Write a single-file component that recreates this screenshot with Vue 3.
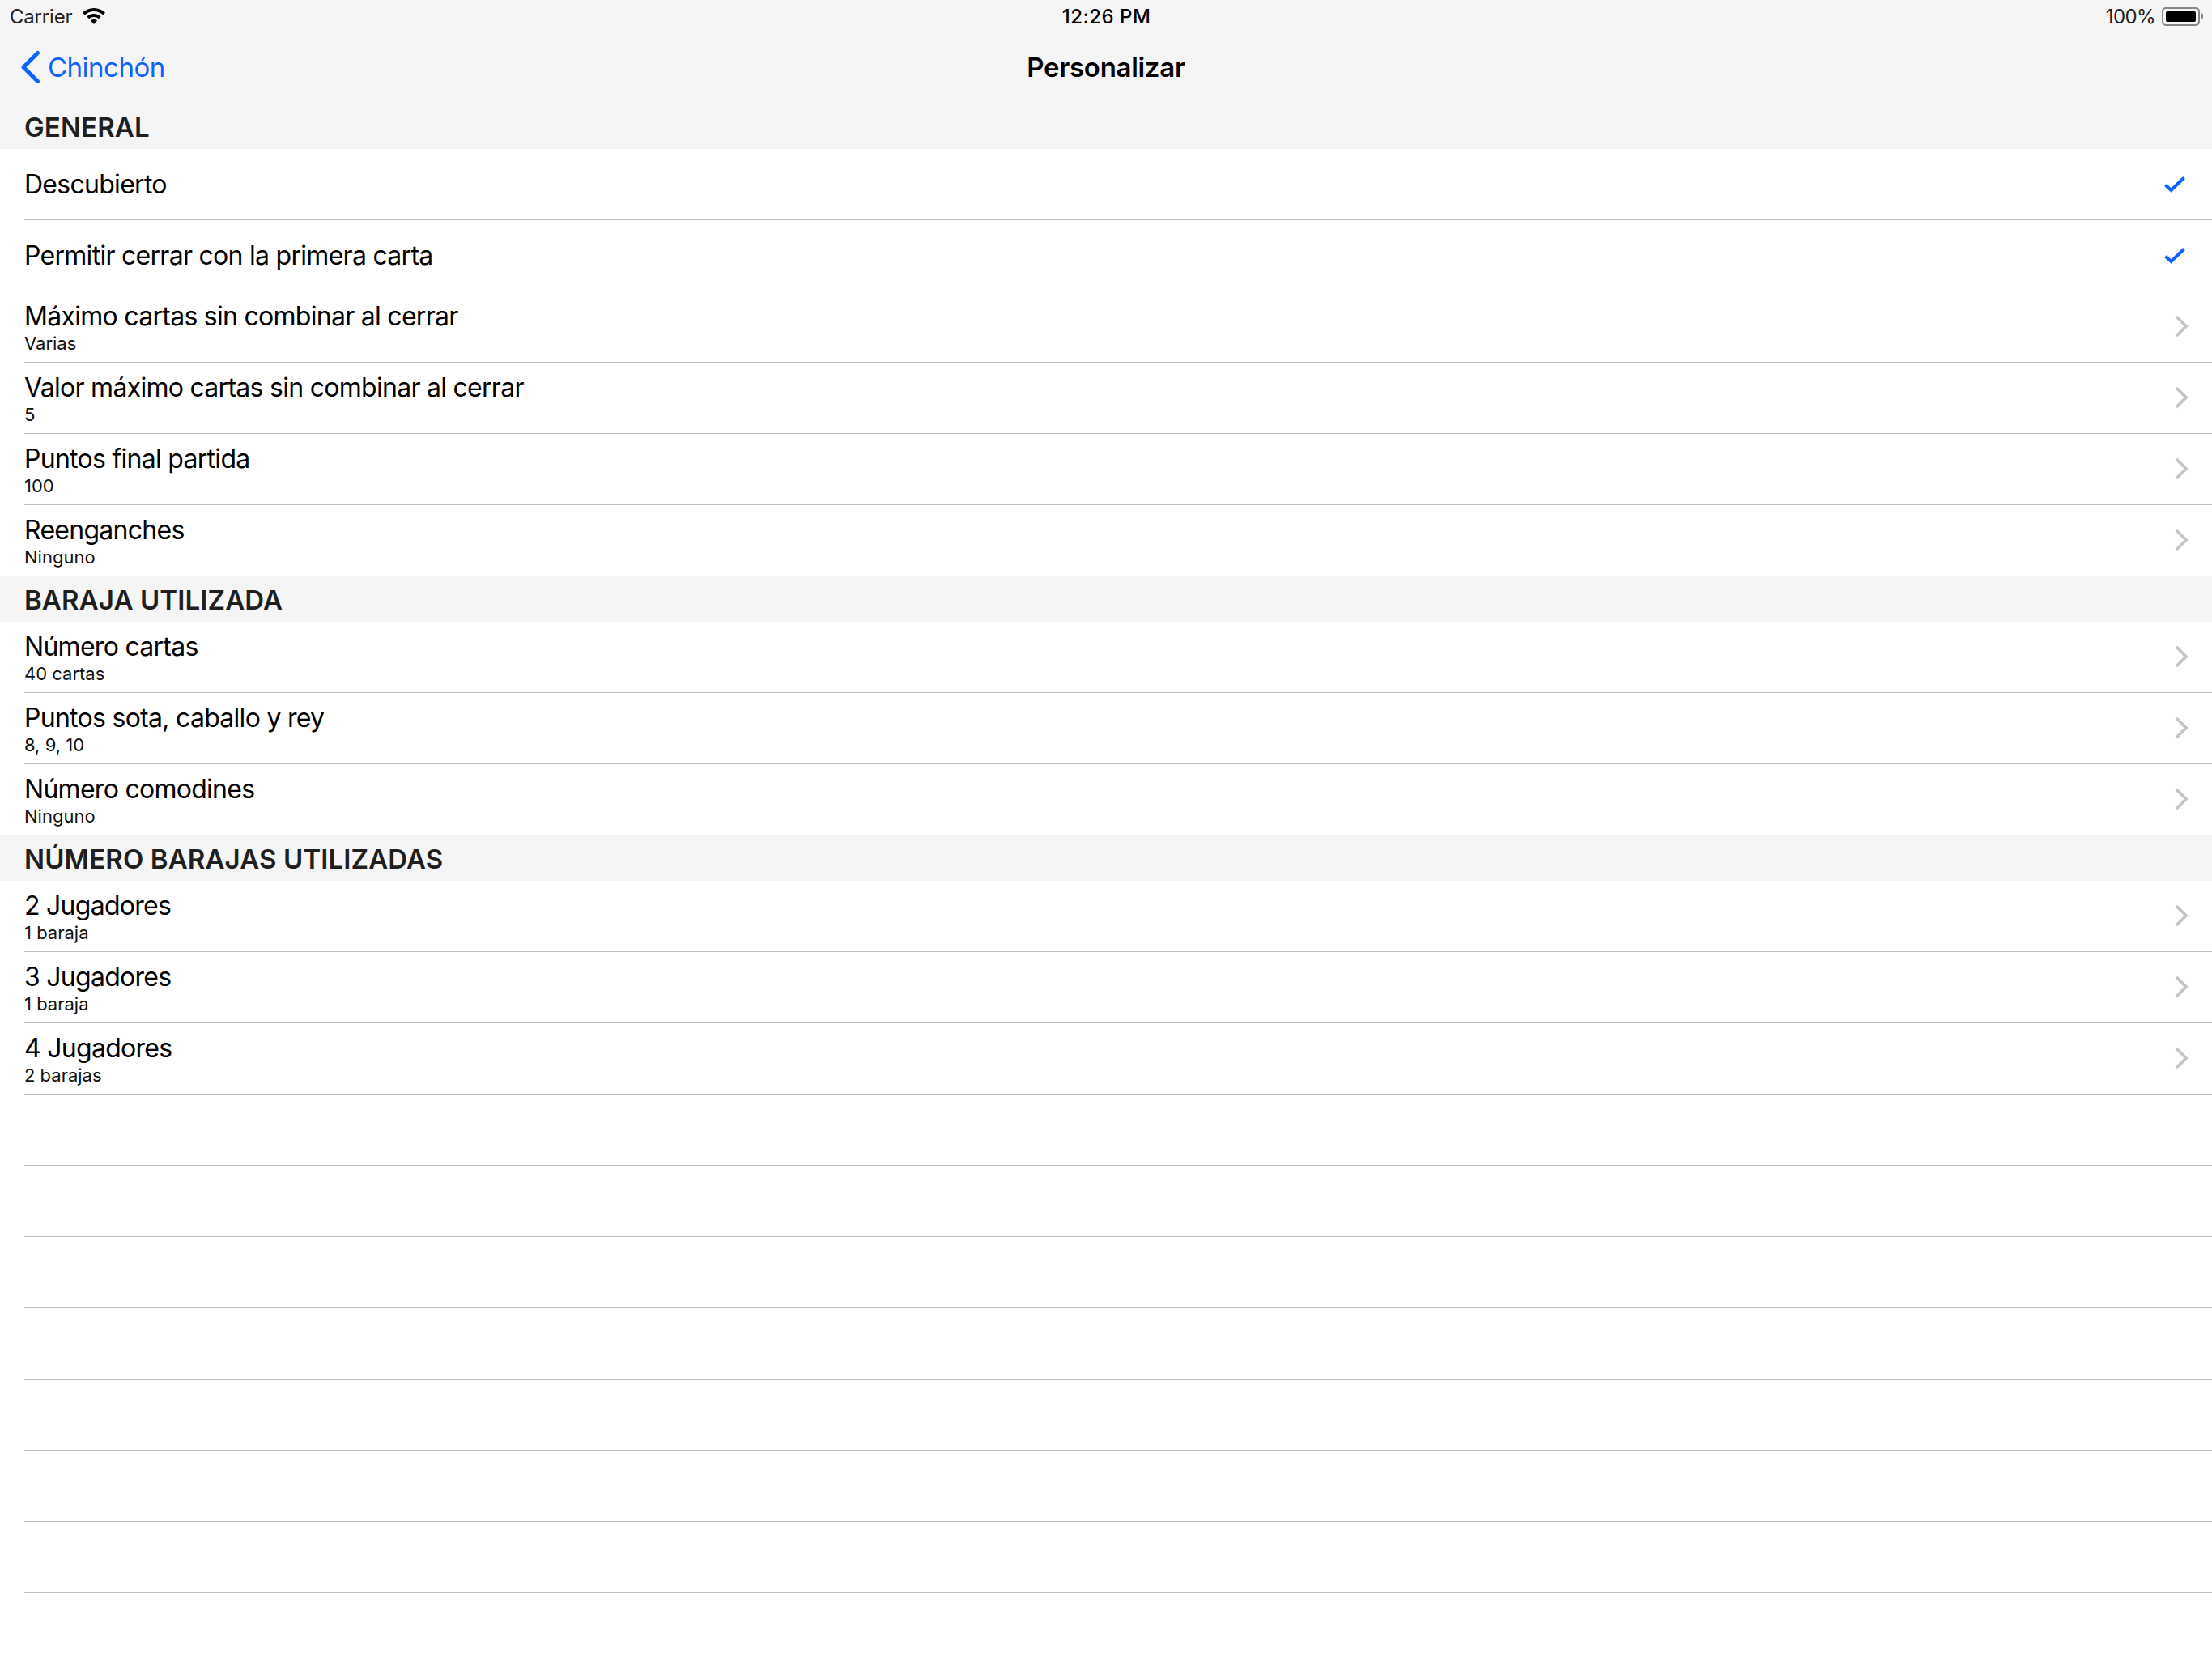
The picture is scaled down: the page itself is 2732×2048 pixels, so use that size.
<template>
  <div class="screen">
    <header class="top">
      <div class="status">
        <div class="status-left">
          <span>Carrier</span>
          <svg class="wifi" width="30" height="22" viewBox="0 0 30 22">
            <path d="M15 1C9.500 1 4.700 3.100 1 6.500L3.800 9.400C6.700 6.700 10.600 5 15 5s8.300 1.700 11.200 4.400L29 6.500C25.300 3.100 20.500 1 15 1z" fill="#000" />
            <path d="M15 8c-3.400 0-6.400 1.300-8.700 3.400l2.800 2.900c1.500-1.400 3.600-2.300 5.900-2.300s4.400.9 5.900 2.300l2.800-2.900C21.400 9.300 18.400 8 15 8z" fill="#000" />
            <path d="M15 15c-1.600 0-3 .6-4 1.600l4 4.400 4-4.400c-1-1-2.400-1.600-4-1.600z" fill="#000" />
          </svg>
        </div>
        <div class="status-time">12:26 PM</div>
        <div class="status-right">
          <span>100%</span>
          <div class="battery"><div class="battery-fill"></div></div>
          <div class="battery-nub"></div>
        </div>
      </div>
      <nav class="nav">
        <div class="back">
          <svg width="26" height="42" viewBox="0 0 26 42">
            <path d="M22.500 3.500L5 21l17.500 17.500" fill="none" stroke="#0f62fe" stroke-width="5" stroke-linecap="round" stroke-linejoin="round" />
          </svg>
          <span>Chinchón</span>
        </div>
        <div class="nav-title">Personalizar</div>
        <div></div>
      </nav>
    </header>

    <template v-for="(section, s) in sections" :key="section.title">
      <div class="section-title">{{ section.title }}</div>
      <div
        v-for="(item, i) in section.items"
        :key="item.label"
        class="row"
      >
        <div class="row-inner" :class="{ plain: i === section.items.length - 1 && s < sections.length - 1 }">
          <div class="row-text" :class="{ double: item.value }">
            <div class="row-label">{{ item.label }}</div>
            <div v-if="item.value" class="row-value">{{ item.value }}</div>
          </div>
          <svg v-if="item.checked" class="check" width="28" height="24" viewBox="0 0 28 24">
            <path d="M2.500 12.500l7 6.500L25.500 3.500" fill="none" stroke="#0f62fe" stroke-width="4" />
          </svg>
          <svg v-else class="chevron" width="18" height="28" viewBox="0 0 18 28">
            <path d="M3 2L15 14 3 26" fill="none" stroke="#c4c4c9" stroke-width="3.800" />
          </svg>
        </div>
      </div>
    </template>

    <div v-for="n in 7" :key="n" class="row">
      <div class="row-inner"></div>
    </div>
  </div>
</template>

<script setup>
const sections = [
  {
    title: 'GENERAL',
    items: [
      { label: 'Descubierto', checked: true },
      { label: 'Permitir cerrar con la primera carta', checked: true },
      { label: 'Máximo cartas sin combinar al cerrar', value: 'Varias' },
      { label: 'Valor máximo cartas sin combinar al cerrar', value: '5' },
      { label: 'Puntos final partida', value: '100' },
      { label: 'Reenganches', value: 'Ninguno' }
    ]
  },
  {
    title: 'BARAJA UTILIZADA',
    items: [
      { label: 'Número cartas', value: '40 cartas' },
      { label: 'Puntos sota, caballo y rey', value: '8, 9, 10' },
      { label: 'Número comodines', value: 'Ninguno' }
    ]
  },
  {
    title: 'NÚMERO BARAJAS UTILIZADAS',
    items: [
      { label: '2 Jugadores', value: '1 baraja' },
      { label: '3 Jugadores', value: '1 baraja' },
      { label: '4 Jugadores', value: '2 barajas' }
    ]
  }
]
</script>

<style>
html, body { background: #fff; }
</style>

<style scoped>
.screen {
  width: 2732px;
  height: 2048px;
  overflow: hidden;
  background: #fff;
  font-family: Inter, "Liberation Sans", sans-serif;
  color: #000;
}

.top {
  position: relative;
  margin-bottom: -1px;
  background: #f5f5f5;
  border-bottom: 1px solid #a7a7aa;
}

.status {
  height: 40px;
  display: grid;
  grid-template-columns: 1fr auto 1fr;
  align-items: center;
  padding: 0 11px 0 12px;
  font-size: 24px;
}

.status-left {
  display: flex;
  align-items: center;
  gap: 12px;
  color: #222;
}

.status-left span { letter-spacing: -0.2px; }

.status-time {
  font-weight: 500;
  letter-spacing: 0.5px;
}

.status-right {
  display: flex;
  align-items: center;
  justify-content: flex-end;
  color: #222;
}

.status-right span { letter-spacing: -0.6px; }

.battery {
  margin-left: 8px;
  width: 47px;
  height: 23px;
  box-sizing: border-box;
  padding: 3px;
  border: 2px solid #868686;
  border-radius: 5px;
}

.battery-fill {
  height: 100%;
  background: #000;
  border-radius: 2px;
}

.battery-nub {
  width: 3px;
  height: 8px;
  margin-left: 1px;
  background: #868686;
  border-radius: 0 3px 3px 0;
}

.nav {
  height: 88px;
  display: grid;
  grid-template-columns: 1fr auto 1fr;
  align-items: center;
  padding-bottom: 3px;
  box-sizing: border-box;
}

.back {
  display: flex;
  align-items: center;
  gap: 9px;
  padding-left: 24px;
  font-size: 33px;
  letter-spacing: -0.5px;
  color: #0f62fe;
}

.nav-title {
  font-size: 33px;
  font-weight: 600;
  letter-spacing: -0.3px;
}

.section-title {
  height: 56px;
  line-height: 58px;
  padding-left: 30px;
  background: #f5f5f5;
  font-size: 33px;
  font-weight: 600;
  letter-spacing: 0.12px;
  color: #1f1f1f;
}

.row {
  height: 88px;
  padding-left: 30px;
  box-sizing: border-box;
}

.row-inner {
  height: 100%;
  box-sizing: border-box;
  display: flex;
  align-items: center;
  justify-content: space-between;
  border-bottom: 1px solid #c0c0c4;
}

.row-inner.plain { border-bottom-color: transparent; }

.row-text.double { padding-top: 1px; }

.row-label {
  font-size: 32px;
  line-height: 38px;
  letter-spacing: -0.72px;
}

.row-value {
  margin-top: 1px;
  font-size: 22px;
  line-height: 26px;
  color: #111;
}

.check { margin-right: 32px; }

.chevron {
  margin-right: 29px;
  margin-bottom: 2px;
}
</style>
